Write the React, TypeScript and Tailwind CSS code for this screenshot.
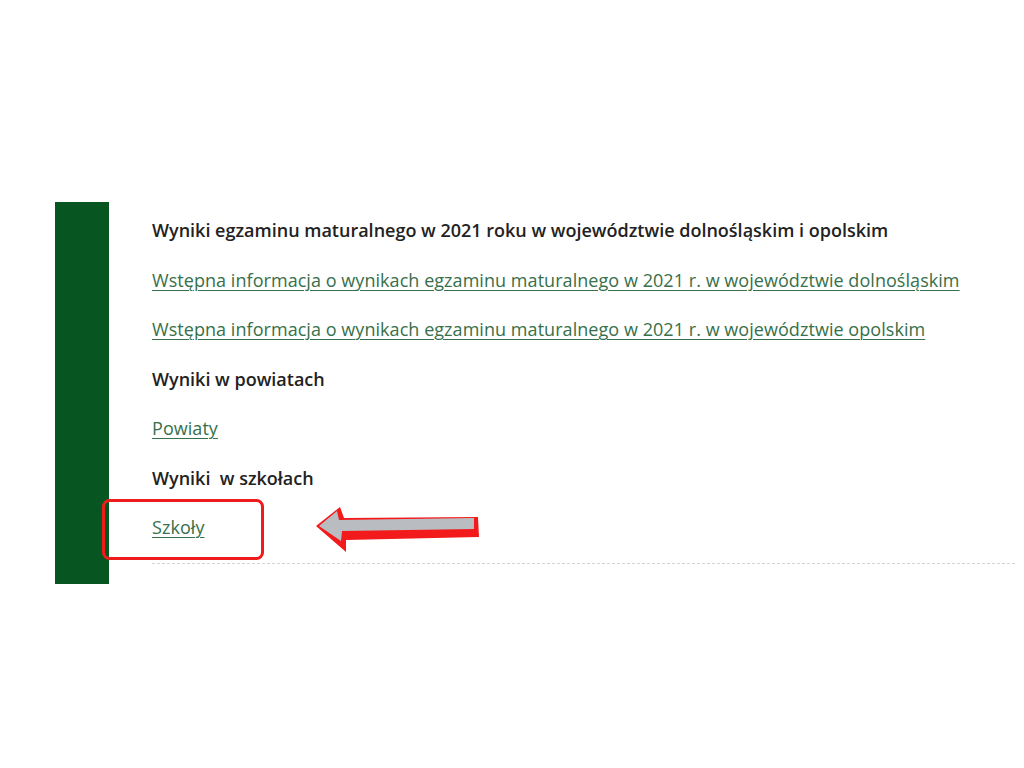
import React from "react"

const items: { text: string; link?: boolean }[] = [
  { text: "Wyniki egzaminu maturalnego w 2021 roku w województwie dolnośląskim i opolskim" },
  { text: "Wstępna informacja o wynikach egzaminu maturalnego w 2021 r. w województwie dolnośląskim", link: true },
  { text: "Wstępna informacja o wynikach egzaminu maturalnego w 2021 r. w województwie opolskim", link: true },
  { text: "Wyniki w powiatach" },
  { text: "Powiaty", link: true },
  { text: "Wyniki\u00a0 w szkołach" },
  { text: "Szkoły", link: true },
]

function Arrow() {
  return (
    <svg className="absolute left-0 top-0 pointer-events-none" width="1024" height="768" viewBox="0 0 1024 768">
      <rect x="103.5" y="500.5" width="159" height="58" rx="6" fill="none" stroke="#f01c1c" strokeWidth="3" />
      <polygon points="316,526 340,507 344,518 478,517 479,537 346,540 346,552" fill="#f21a1a" />
      <polygon points="319,526 337,511 339,520 474,518 474,529 342,531 341,541" fill="#b9bdc2" />
    </svg>
  )
}

export default function App() {
  return (
    <div className="relative w-[1024px] h-[768px] bg-white overflow-hidden" style={{ fontFamily: "'Open Sans', Lato, sans-serif" }}>
      <div className="flex ml-[55px] mr-[9px] mt-[202px]">
        <div className="w-[54px] bg-[#075520] shrink-0"></div>
        <div className="flex-1 pl-[43px] pt-[15px] pb-[20px]">
          <div className="flex flex-col gap-[22.5px]">
            {items.map((it, i) =>
              it.link ? (
                <a key={i} href="#" className="block text-[18px] leading-[27px] text-[#37704a] underline underline-offset-[3px] decoration-1 w-fit tracking-[0.05px]">
                  {it.text}
                </a>
              ) : (
                <p key={i} className="text-[18px] leading-[27px] font-semibold text-[#222222]">
                  {it.text}
                </p>
              )
            )}
          </div>
          <div className="mt-[22px] border-t border-dashed border-[#d4d4d4]"></div>
        </div>
      </div>
      <Arrow />
    </div>
  )
}
